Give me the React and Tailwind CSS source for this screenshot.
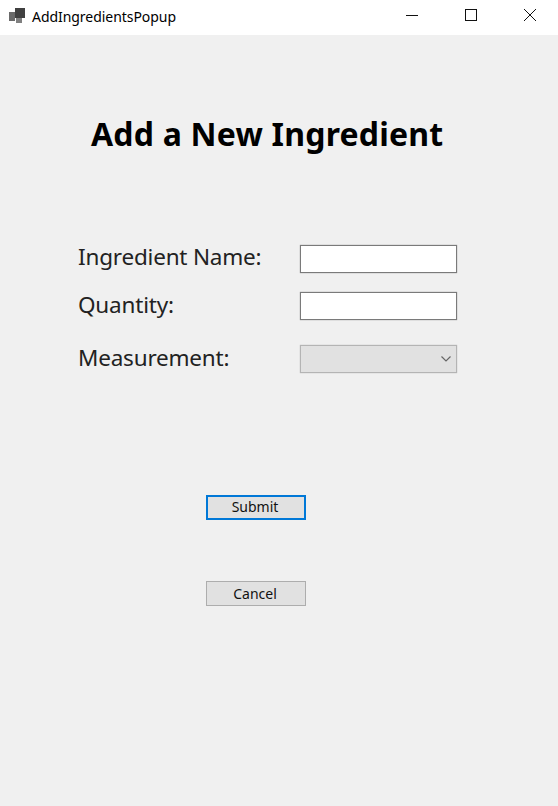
export default function App() {
  return (
    <div className="w-[558px] h-[806px] flex flex-col overflow-hidden bg-[#f0f0f0] text-black font-['Noto_Sans','Open_Sans',sans-serif]">
      <header className="h-[35px] bg-white flex items-center shrink-0">
        <svg className="ml-[9px] mt-[-4px]" width="16" height="16" viewBox="0 0 16 16">
          <rect x="0" y="4" width="6" height="9" fill="#6a6a6a" />
          <rect x="6" y="0" width="10" height="10" fill="#404040" />
          <rect x="7" y="10" width="6" height="5" fill="#808080" />
        </svg>
        <span className="ml-[7px] text-[14px] leading-none mt-[-2px] tracking-[-0.05px]">AddIngredientsPopup</span>
        <div className="ml-auto flex items-center">
          <svg width="14" height="14" viewBox="0 0 14 14" className="mr-[45px] mt-[-5px]"><path d="M1 7.5H13" stroke="#111" strokeWidth="1" /></svg>
          <svg width="14" height="14" viewBox="0 0 14 14" className="mr-[45px] mt-[-5px]"><rect x="1.5" y="1.5" width="11" height="11" fill="none" stroke="#111" strokeWidth="1" /></svg>
          <svg width="14" height="14" viewBox="0 0 14 14" className="mr-[21px] mt-[-5px]"><path d="M1 1L13 13M13 1L1 13" stroke="#111" strokeWidth="1" /></svg>
        </div>
      </header>

      <main className="flex-1 flex flex-col">
        <h1 className="mt-[78px] ml-[91px] text-[32px] leading-[42px] font-bold tracking-[0.2px]">Add a New Ingredient</h1>

        <div className="mt-[90px] ml-[78px] flex flex-col">
          <div className="flex items-center h-[28px]">
            <label className="w-[222px] text-[22.5px] leading-none text-[#222] mt-[-4px] tracking-[-0.2px]">Ingredient Name:</label>
            <input className="w-[157px] h-[28px] bg-white border border-[#7a7a7a] shadow-[0_0_1px_#8a8a8a] outline-none" />
          </div>
          <div className="flex items-center h-[28px] mt-[19px]">
            <label className="w-[222px] text-[22.5px] leading-none text-[#222] mt-[-1px] tracking-[-0.2px]">Quantity:</label>
            <input className="w-[157px] h-[28px] bg-white border border-[#7a7a7a] shadow-[0_0_1px_#8a8a8a] outline-none" />
          </div>
          <div className="flex items-center h-[28px] mt-[25px]">
            <label className="w-[222px] text-[22.5px] leading-none text-[#222] mt-[-1px] tracking-[-0.2px]">Measurement:</label>
            <div className="w-[157px] h-[28px] bg-[#e1e1e1] border border-[#b4b4b4] shadow-[0_0_1px_#b4b4b4] flex items-center justify-end pr-[5px]">
              <svg width="10" height="6" viewBox="0 0 10 6"><path d="M0.5 0.5L5 5L9.5 0.5" fill="none" stroke="#666" strokeWidth="1.2" /></svg>
            </div>
          </div>
        </div>

        <div className="mt-[122px] ml-[206px] flex flex-col gap-[61px]">
          <button className="w-[100px] h-[25px] bg-[#e1e1e1] border-2 border-[#0078d7] text-[14px] leading-none text-[#111] pr-[2px] pb-[2px]">Submit</button>
          <button className="w-[100px] h-[25px] bg-[#e1e1e1] border border-[#adadad] text-[14px] leading-none text-[#111] pr-[2px]">Cancel</button>
        </div>
      </main>
    </div>
  );
}
